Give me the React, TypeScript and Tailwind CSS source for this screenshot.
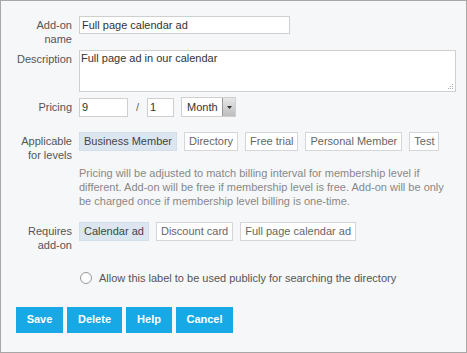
import React from "react";

const levels = [
  { label: "Business Member", on: true },
  { label: "Directory", on: false },
  { label: "Free trial", on: false },
  { label: "Personal Member", on: false },
  { label: "Test", on: false },
];

const addons = [
  { label: "Calendar ad", on: true },
  { label: "Discount card", on: false },
  { label: "Full page calendar ad", on: false },
];

const buttons = [
  { label: "Save", w: "w-[47px]" },
  { label: "Delete", w: "w-[55px]" },
  { label: "Help", w: "w-[46px]" },
  { label: "Cancel", w: "w-[57px]" },
];

const Chip = ({ label, on }: { label: string; on: boolean }) => (
  <span
    className={`flex h-[19px] shrink-0 items-center whitespace-nowrap border px-[4px] text-[11px] leading-none ${
      on ? "border-[#d3dee9] bg-[#dce6f0] text-[#444]" : "border-[#d6d6d6] bg-white text-[#666]"
    }`}
  >
    {label}
  </span>
);

const Label = ({ children }: { children: React.ReactNode }) => (
  <div className="w-[56px] shrink-0 text-right text-[11px] leading-[14px] text-[#555]">{children}</div>
);

export default function App() {
  return (
    <div
      className="h-[353px] w-[467px] border border-[#a7a7a7] bg-[#f6f7f9] pl-[15px] pt-[15px] text-[#444]"
      style={{ fontFamily: "'Liberation Sans', Arial, sans-serif" }}
    >
      <div className="flex gap-[7px]">
        <div className="pt-[2px]">
          <Label>
            Add-on
            <br />
            name
          </Label>
        </div>
        <input
          readOnly
          value="Full page calendar ad"
          className="h-[18px] w-[211px] border border-[#cfcfcf] bg-white px-[2px] text-[11px] text-[#333] outline-none"
        />
      </div>

      <div className="mt-[4px] flex gap-[7px]">
        <div className="pt-[2px]">
          <Label>Description</Label>
        </div>
        <div className="relative h-[42px] w-[377px] border border-[#cfcfcf] bg-white px-[1px] text-[11px] leading-[14px] text-[#333]">
          Full page ad in our calendar
          <svg className="absolute bottom-[1px] right-[1px]" width="6" height="6" viewBox="0 0 6 6">
            <rect x="4" y="0" width="1" height="1" fill="#aaa" />
            <rect x="2" y="2" width="1" height="1" fill="#aaa" />
            <rect x="4" y="2" width="1" height="1" fill="#aaa" />
            <rect x="0" y="4" width="1" height="1" fill="#aaa" />
            <rect x="2" y="4" width="1" height="1" fill="#aaa" />
            <rect x="4" y="4" width="1" height="1" fill="#aaa" />
          </svg>
        </div>
      </div>

      <div className="mt-[5px] flex items-center gap-[7px]">
        <Label>Pricing</Label>
        <div className="flex items-center">
          <input
            readOnly
            value="9"
            className="h-[19px] w-[49px] border border-[#cfcfcf] bg-white px-[2px] text-[11px] text-[#333] outline-none"
          />
          <span className="w-[19px] text-center text-[11px] text-[#666]">/</span>
          <input
            readOnly
            value="1"
            className="h-[19px] w-[27px] border border-[#cfcfcf] bg-white px-[2px] text-[11px] text-[#333] outline-none"
          />
          <div className="ml-[7px] flex h-[20px] w-[55px] items-center border border-[#cfcfcf] bg-white">
            <span className="flex-1 pl-[5px] text-[11px] text-[#333]">Month</span>
            <span className="flex h-full w-[13px] items-center justify-center border-l border-[#999] bg-gradient-to-b from-[#e8e8e8] to-[#bdbdbd]">
              <svg width="5" height="3" viewBox="0 0 5 3">
                <path d="M0 0h5L2.5 3z" fill="#333" />
              </svg>
            </span>
          </div>
        </div>
      </div>

      <div className="mt-[15px] flex gap-[7px]">
        <div className="pt-[2px]">
          <Label>
            Applicable
            <br />
            for levels
          </Label>
        </div>
        <div className="flex flex-col">
          <div className="flex gap-[7px]">
            {levels.map((l) => (
              <Chip key={l.label} {...l} />
            ))}
          </div>
          <p className="mt-[15px] w-[376px] text-[11px] leading-[14px] text-[#888]">
            Pricing will be adjusted to match billing interval for membership level if different. Add-on will be free if
            membership level is free. Add-on will be only be charged once if membership level billing is one-time.
          </p>
        </div>
      </div>

      <div className="mt-[14px] flex gap-[7px]">
        <div className="pt-[2px]">
          <Label>
            Requires
            <br />
            add-on
          </Label>
        </div>
        <div className="flex h-fit gap-[7px]">
          {addons.map((a) => (
            <Chip key={a.label} {...a} />
          ))}
        </div>
      </div>

      <div className="mt-[18px] flex items-center gap-[7px] pl-[64px]">
        <span className="h-[12px] w-[12px] rounded-full border border-[#999] bg-white" />
        <span className="text-[11px] text-[#555]">Allow this label to be used publicly for searching the directory</span>
      </div>

      <div className="mt-[20px] flex gap-1">
        {buttons.map((b) => (
          <button key={b.label} className={`h-[26px] ${b.w} bg-[#17a9e6] text-[11px] font-bold text-white`}>
            {b.label}
          </button>
        ))}
      </div>
    </div>
  );
}
